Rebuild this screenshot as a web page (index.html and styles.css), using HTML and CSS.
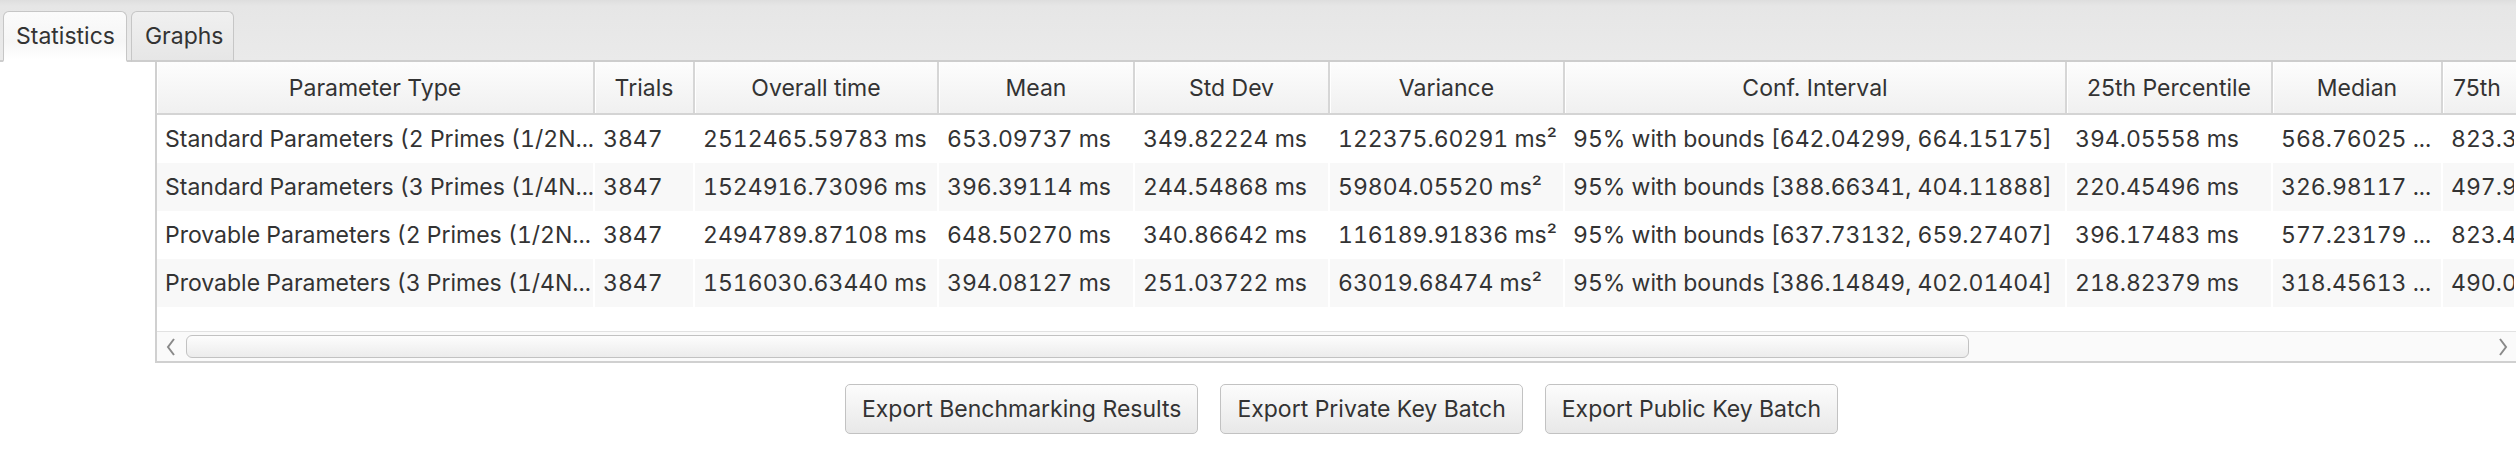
FILE: index.html
```html
<!DOCTYPE html>
<html>
<head>
<meta charset="utf-8">
<link rel="stylesheet" href="styles.css">
</head>
<body>
<div class="app">
  <div class="tabbar">
    <div class="tab selected">Statistics</div>
    <div class="tab">Graphs</div>
  </div>
  <div class="content">
    <div class="table">
      <div class="thead cols">
        <div class="th">Parameter Type</div>
        <div class="th">Trials</div>
        <div class="th">Overall time</div>
        <div class="th">Mean</div>
        <div class="th">Std Dev</div>
        <div class="th">Variance</div>
        <div class="th">Conf. Interval</div>
        <div class="th">25th Percentile</div>
        <div class="th">Median</div>
        <div class="th th-left">75th</div>
      </div>
      <div class="tbody">
        <div class="tr cols">
          <div class="td">Standard Parameters (2 Primes (1/2N...</div>
          <div class="td">3847</div>
          <div class="td">2512465.59783 ms</div>
          <div class="td">653.09737 ms</div>
          <div class="td">349.82224 ms</div>
          <div class="td">122375.60291 ms²</div>
          <div class="td">95% with bounds [642.04299, 664.15175]</div>
          <div class="td">394.05558 ms</div>
          <div class="td">568.76025 ...</div>
          <div class="td">823.3</div>
        </div>
        <div class="tr cols alt">
          <div class="td">Standard Parameters (3 Primes (1/4N...</div>
          <div class="td">3847</div>
          <div class="td">1524916.73096 ms</div>
          <div class="td">396.39114 ms</div>
          <div class="td">244.54868 ms</div>
          <div class="td">59804.05520 ms²</div>
          <div class="td">95% with bounds [388.66341, 404.11888]</div>
          <div class="td">220.45496 ms</div>
          <div class="td">326.98117 ...</div>
          <div class="td">497.9</div>
        </div>
        <div class="tr cols">
          <div class="td">Provable Parameters (2 Primes (1/2N...</div>
          <div class="td">3847</div>
          <div class="td">2494789.87108 ms</div>
          <div class="td">648.50270 ms</div>
          <div class="td">340.86642 ms</div>
          <div class="td">116189.91836 ms²</div>
          <div class="td">95% with bounds [637.73132, 659.27407]</div>
          <div class="td">396.17483 ms</div>
          <div class="td">577.23179 ...</div>
          <div class="td">823.4</div>
        </div>
        <div class="tr cols alt">
          <div class="td">Provable Parameters (3 Primes (1/4N...</div>
          <div class="td">3847</div>
          <div class="td">1516030.63440 ms</div>
          <div class="td">394.08127 ms</div>
          <div class="td">251.03722 ms</div>
          <div class="td">63019.68474 ms²</div>
          <div class="td">95% with bounds [386.14849, 402.01404]</div>
          <div class="td">218.82379 ms</div>
          <div class="td">318.45613 ...</div>
          <div class="td">490.0</div>
        </div>
      </div>
      <div class="hscroll">
        <span class="arrow">
          <svg width="12" height="20" viewBox="0 0 12 20"><path d="M9 2 L3 10 L9 18" fill="none" stroke="#8a8a8a" stroke-width="2"/></svg>
        </span>
        <div class="track"><div class="thumb"></div></div>
        <span class="arrow">
          <svg width="12" height="20" viewBox="0 0 12 20"><path d="M3 2 L9 10 L3 18" fill="none" stroke="#8a8a8a" stroke-width="2"/></svg>
        </span>
      </div>
    </div>
    <div class="actions">
      <button class="btn">Export Benchmarking Results</button>
      <button class="btn">Export Private Key Batch</button>
      <button class="btn">Export Public Key Batch</button>
    </div>
  </div>
</div>
</body>
</html>
```

FILE: styles.css
```css
* { box-sizing: border-box; }
html, body {
  margin: 0;
  padding: 0;
  background: #fff;
  overflow: hidden;
}
body {
  font-family: Inter, "Liberation Sans", sans-serif;
  font-size: 23px;
  color: #333;
}
.app {
  width: 2516px;
  height: 453px;
  overflow: hidden;
}
.tabbar {
  height: 62px;
  background: linear-gradient(#dedede 0px, #e6e6e6 6px, #eaeaea 100%);
  border-bottom: 2px solid #cdcdcd;
  display: flex;
  align-items: flex-end;
  gap: 4px;
  padding-left: 3px;
}
.tab {
  height: 51px;
  margin-bottom: -2px;
  padding: 0 10px 0 13px;
  display: flex;
  align-items: center;
  border: 1.5px solid #c6c6c6;
  border-bottom: 2px solid #cdcdcd;
  border-radius: 6px 6px 0 0;
  background: linear-gradient(#f0f0f0, #e6e6e6);
  color: #333;
}
.tab.selected {
  padding: 0 11px 0 12px;
  background: linear-gradient(#fbfbfb, #f6f6f6 60%, #fff);
  border-bottom: 2px solid #fff;
}
.content {
  padding-left: 155px;
}
.table {
  border: 2px solid #d0d0d0;
  border-right: none;
  border-top: none;
  width: 100%;
  overflow: hidden;
  background: #fff;
}
.cols {
  display: grid;
  grid-template-columns: 438px 100px 244px 196px 195px 235px 502px 206px 170px 73px;
  width: max-content;
}
.thead {
  height: 53px;
  background: linear-gradient(#fdfdfd, #f0f0f0);
  border-bottom: 2px solid #d4d4d4;
}
.th {
  display: flex;
  align-items: center;
  justify-content: center;
  border-right: 2px solid #d6d6d6;
  box-shadow: inset 1px 0 0 #fff;
  white-space: nowrap;
  overflow: hidden;
}
.th-left {
  justify-content: flex-start;
  padding-left: 10px;
  border-right: none;
}
.tbody {
  height: 216px;
}
.tr {
  height: 48px;
  background: #fff;
}
.tr.alt {
  background: #f8f8f8;
}
.td {
  display: flex;
  align-items: center;
  padding-left: 8px;
  border-right: 2px solid #fff;
  white-space: nowrap;
  overflow: hidden;
  font-feature-settings: "tnum";
}
.hscroll {
  height: 30px;
  border-top: 1px solid #e2e2e2;
  background: #fafafa;
  display: flex;
  align-items: center;
  padding: 0 4px 0 5px;
}
.arrow {
  width: 18px;
  display: flex;
  align-items: center;
  justify-content: center;
}
.track {
  flex: 1;
  height: 24px;
  padding: 0 4px 0 6px;
  display: flex;
  align-items: center;
}
.thumb {
  width: 1783px;
  height: 23px;
  border: 1.5px solid #c2c2c2;
  border-radius: 6px;
  background: linear-gradient(#fdfdfd, #ececec);
}
.actions {
  display: flex;
  justify-content: center;
  gap: 22px;
  margin-top: 21px;
  padding-left: 12px;
}
.btn {
  font-family: Inter, "Liberation Sans", sans-serif;
  font-size: 23px;
  color: #333;
  height: 50px;
  padding: 0 16px;
  border: 1.5px solid #c2c2c2;
  border-radius: 5px;
  background: linear-gradient(#fcfcfc, #e8e8e8);
}
```
